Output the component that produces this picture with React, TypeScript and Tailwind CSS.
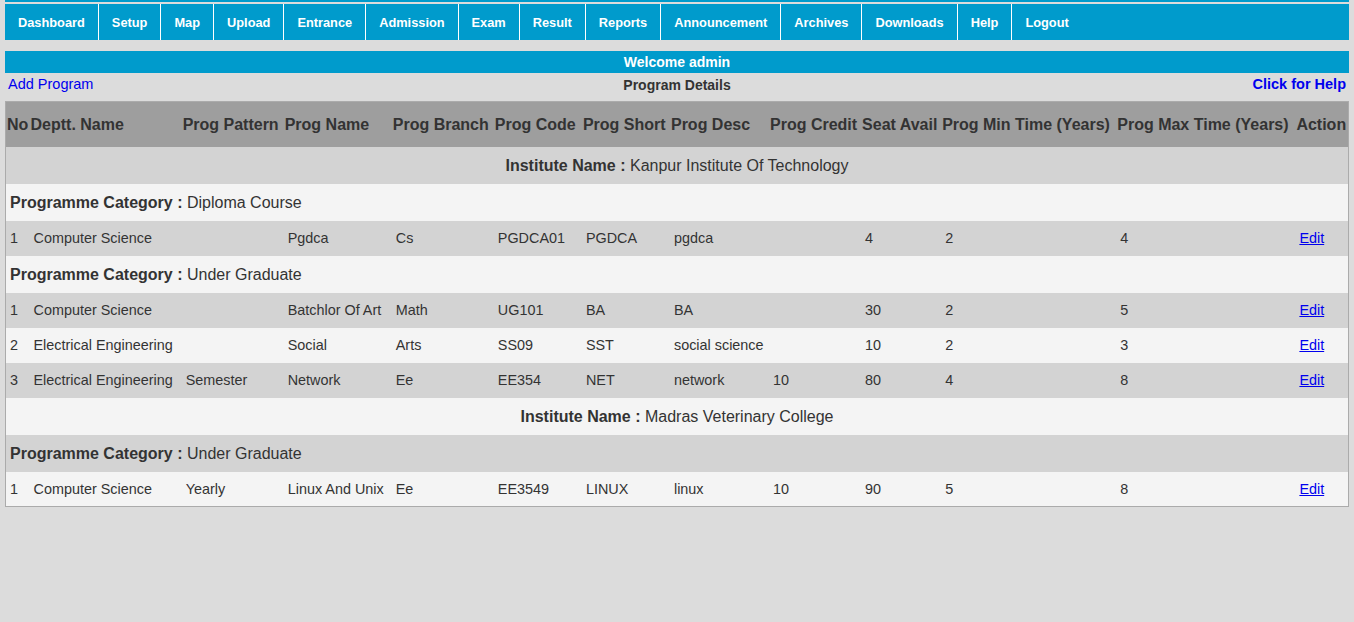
import React from "react";

const navItems = [
  "Dashboard",
  "Setup",
  "Map",
  "Upload",
  "Entrance",
  "Admission",
  "Exam",
  "Result",
  "Reports",
  "Announcement",
  "Archives",
  "Downloads",
  "Help",
  "Logout",
];

const columns = [
  { label: "No", width: "w-[24px]" },
  { label: "Deptt. Name", width: "w-[152px]" },
  { label: "Prog Pattern", width: "w-[102px]" },
  { label: "Prog Name", width: "w-[108px]" },
  { label: "Prog Branch", width: "w-[102px]" },
  { label: "Prog Code", width: "w-[88px]" },
  { label: "Prog Short", width: "w-[88px]" },
  { label: "Prog Desc", width: "w-[99px]" },
  { label: "Prog Credit", width: "w-[92px]" },
  { label: "Seat Avail", width: "w-[80px]" },
  { label: "Prog Min Time (Years)", width: "w-[175px]" },
  { label: "Prog Max Time (Years)", width: "w-[179px]" },
  { label: "Action", width: "w-[53px]" },
];

type Row =
  | { kind: "institute"; name: string }
  | { kind: "category"; name: string }
  | { kind: "data"; cells: string[] };

const rows: Row[] = [
  { kind: "institute", name: "Kanpur Institute Of Technology" },
  { kind: "category", name: "Diploma Course" },
  {
    kind: "data",
    cells: ["1", "Computer Science", "", "Pgdca", "Cs", "PGDCA01", "PGDCA", "pgdca", "", "4", "2", "4"],
  },
  { kind: "category", name: "Under Graduate" },
  {
    kind: "data",
    cells: ["1", "Computer Science", "", "Batchlor Of Art", "Math", "UG101", "BA", "BA", "", "30", "2", "5"],
  },
  {
    kind: "data",
    cells: ["2", "Electrical Engineering", "", "Social", "Arts", "SS09", "SST", "social science", "", "10", "2", "3"],
  },
  {
    kind: "data",
    cells: ["3", "Electrical Engineering", "Semester", "Network", "Ee", "EE354", "NET", "network", "10", "80", "4", "8"],
  },
  { kind: "institute", name: "Madras Veterinary College" },
  { kind: "category", name: "Under Graduate" },
  {
    kind: "data",
    cells: ["1", "Computer Science", "Yearly", "Linux And Unix", "Ee", "EE3549", "LINUX", "linux", "10", "90", "5", "8"],
  },
];

export default function App() {
  return (
    <div className="min-h-[622px] bg-[#dcdcdc] px-[5px] font-['Liberation_Sans',Arial,sans-serif] text-[#333]">
      <div className="h-[2px] bg-[#009bcc]" />
      <nav className="mt-[2px] flex h-[36px] bg-[#009bcc]">
        {navItems.map((item) => (
          <a
            key={item}
            href="#"
            className="flex items-center border-r border-white px-[13px] pt-[2px] text-[12.8px] font-bold text-white last:border-r-0"
          >
            {item}
          </a>
        ))}
      </nav>

      <div className="mt-[11px] flex h-[22px] items-center justify-center bg-[#009bcc] text-[14px] font-bold text-white">
        Welcome admin
      </div>

      <div className="flex h-[22px] items-center justify-between px-[3px] pt-[2px]">
        <a href="#" className="w-[200px] text-[14.5px] text-[#0000ee]">
          Add Program
        </a>
        <span className="text-[14px] font-bold">Program Details</span>
        <a href="#" className="w-[200px] text-right text-[14.5px] font-bold text-[#0000ee]">
          Click for Help
        </a>
      </div>

      <table className="mt-[6px] w-full table-fixed border border-[#ababab] border-collapse">
        <colgroup>
          {columns.map((c) => (
            <col key={c.label} className={c.width} />
          ))}
        </colgroup>
        <thead>
          <tr className="h-[45px] bg-[#9e9e9e]">
            {columns.map((c) => (
              <th key={c.label} className="whitespace-nowrap px-[1px] pt-[2px] text-left text-[16px] font-bold">
                {c.label}
              </th>
            ))}
          </tr>
        </thead>
        <tbody>
          {rows.map((row, i) => {
            const bg = i % 2 === 0 ? "bg-[#d3d3d3]" : "bg-[#f4f4f4]";
            if (row.kind === "institute") {
              return (
                <tr key={i} className={`h-[37px] ${bg}`}>
                  <td colSpan={13} className="pt-[2px] text-center text-[16px]">
                    <b>Institute Name :</b> {row.name}
                  </td>
                </tr>
              );
            }
            if (row.kind === "category") {
              return (
                <tr key={i} className={`h-[37px] ${bg}`}>
                  <td colSpan={13} className="px-[4px] pt-[2px] text-[16px]">
                    <b>Programme Category :</b> {row.name}
                  </td>
                </tr>
              );
            }
            return (
              <tr key={i} className={`h-[35px] ${bg}`}>
                {row.cells.map((cell, j) => (
                  <td key={j} className="whitespace-nowrap px-[4px] pt-[2px] text-[14.4px]">
                    {cell}
                  </td>
                ))}
                <td className="px-[4px] pt-[2px] text-[14.4px]">
                  <a href="#" className="text-[#0000ee] underline">
                    Edit
                  </a>
                </td>
              </tr>
            );
          })}
        </tbody>
      </table>
    </div>
  );
}
